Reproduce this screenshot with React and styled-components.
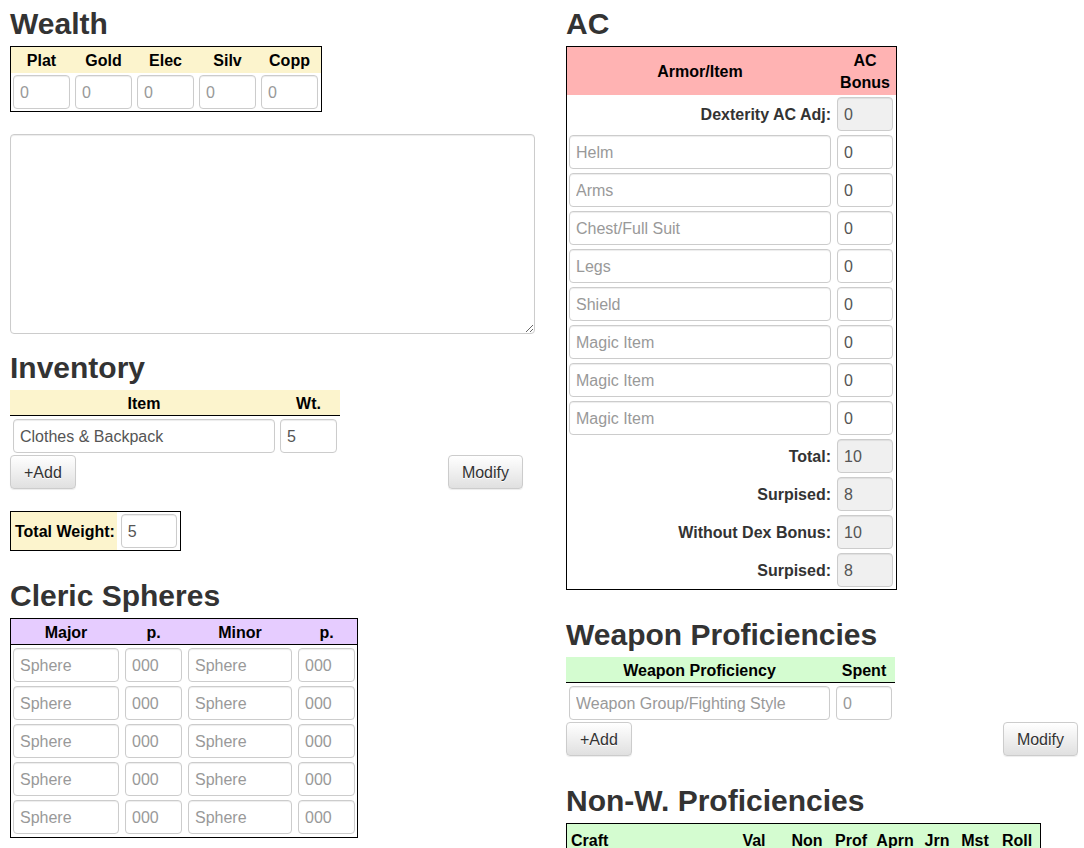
import React from "react";
import styled, { createGlobalStyle } from "styled-components";

const GlobalStyle = createGlobalStyle`
  html, body { margin: 0; padding: 0; background: #fff; }
  body {
    font-family: "Liberation Sans", Arial, Helvetica, sans-serif;
    font-size: 16px;
    color: #333;
  }
  * { box-sizing: border-box; }
`;

const YELLOW = "#fcf4cd";
const PINK = "#ffb3b3";
const LAVENDER = "#e6ccff";
const GREEN = "#d4fcd0";

const Page = styled.div`
  display: grid;
  grid-template-columns: 513px 512px;
  column-gap: 43px;
  padding: 7px 0 0 10px;
  align-items: start;
`;

const Column = styled.div`
  display: flex;
  flex-direction: column;
  align-items: flex-start;
  min-width: 0;
`;

const Heading = styled.h2`
  font-size: 30px;
  line-height: 33px;
  font-weight: 700;
  color: #333;
  margin: ${(p) => p.$mt || 0}px 0 6px;
`;

const Field = styled.input`
  display: block;
  width: ${(p) => (p.$w ? `${p.$w}px` : "100%")};
  height: 34px;
  padding: 7px 6px 5px;
  border: 1px solid #ccc;
  border-radius: 4px;
  background: #fff;
  font-family: inherit;
  font-size: 16px;
  color: #555;
  box-shadow: inset 0 1px 1px rgba(0, 0, 0, 0.075);
  margin: ${(p) => p.$m || 0};
  &::placeholder { color: #999; opacity: 1; }
  &[readonly] { background: #f0f0f0; }
`;

const Notes = styled.textarea`
  display: block;
  width: 525px;
  height: 200px;
  margin-top: 22px;
  border: 1px solid #ccc;
  border-radius: 4px;
  box-shadow: inset 0 1px 1px rgba(0, 0, 0, 0.075);
  font-family: inherit;
  font-size: 16px;
  padding: 6px;
`;

const Framed = styled.div`
  border: 1px solid #000;
  background: #fff;
  width: ${(p) => (p.$w ? `${p.$w}px` : "auto")};
`;

const Grid = styled.div`
  display: grid;
  grid-template-columns: ${(p) => p.$cols};
  column-gap: ${(p) => p.$gap}px;
  padding: ${(p) => p.$pad || "0"};
  align-items: center;
`;

const HeadRow = styled(Grid)`
  background: ${(p) => p.$bg};
  height: ${(p) => p.$h || 26}px;
  border-bottom: ${(p) => (p.$rule ? "1px solid #000" : "none")};
`;

const HeadCell = styled.div`
  font-weight: 700;
  font-size: 16px;
  line-height: 22px;
  padding-top: ${(p) => p.$pt ?? 2}px;
  color: #000;
  text-align: ${(p) => p.$align || "center"};
  padding-left: ${(p) => p.$pl || 0}px;
`;

const Rows = styled.div`
  display: flex;
  flex-direction: column;
  gap: 4px;
  padding: ${(p) => p.$pad};
`;

const RowLabel = styled.div`
  font-weight: 700;
  font-size: 16px;
  color: #333;
  text-align: right;
  padding-top: 2px;
`;

const ButtonBar = styled.div`
  display: flex;
  justify-content: space-between;
  width: 100%;
  margin-top: 2px;
`;

const Button = styled.button`
  height: 34px;
  padding: 7px 13px 5px;
  font-family: inherit;
  font-size: 16px;
  line-height: 20px;
  color: #333;
  border: 1px solid #ccc;
  border-radius: 4px;
  background: linear-gradient(to bottom, #fff 0%, #e0e0e0 100%);
  box-shadow: inset 0 1px 0 rgba(255, 255, 255, 0.15), 0 1px 1px rgba(0, 0, 0, 0.075);
  text-shadow: 0 1px 0 #fff;
  cursor: pointer;
`;

const TotalBox = styled.div`
  display: flex;
  align-items: stretch;
  border: 1px solid #000;
  margin-top: 22px;
`;

const TotalLabel = styled.div`
  display: flex;
  align-items: center;
  background: ${YELLOW};
  padding: 2px 2px 0 4px;
  font-weight: 700;
  font-size: 16px;
  color: #000;
`;

const coins = ["Plat", "Gold", "Elec", "Silv", "Copp"];
const acItems = [
  "Helm",
  "Arms",
  "Chest/Full Suit",
  "Legs",
  "Shield",
  "Magic Item",
  "Magic Item",
  "Magic Item",
];
const acTotals = [
  ["Total:", "10"],
  ["Surpised:", "8"],
  ["Without Dex Bonus:", "10"],
  ["Surpised:", "8"],
];
const nwCols = [
  ["Craft", "left"],
  ["Val"],
  ["Non"],
  ["Prof"],
  ["Aprn"],
  ["Jrn"],
  ["Mst"],
  ["Roll"],
];

const COIN_COLS = "repeat(5, 57px)";
const SPHERE_COLS = "106px 57px 104px 57px";
const ITEM_COLS = "262px 57px";
const AC_COLS = "262px 56px";
const WP_COLS = "261px 56px";
const NW_COLS = "1fr 54px 52px 36px 52px 32px 44px 40px";

function Wealth() {
  return (
    <>
      <Heading>Wealth</Heading>
      <Framed>
        <HeadRow $bg={YELLOW} $cols={COIN_COLS} $gap={5} $pad="0 3px 0 2px">
          {coins.map((c) => (
            <HeadCell key={c}>{c}</HeadCell>
          ))}
        </HeadRow>
        <Grid $cols={COIN_COLS} $gap={5} $pad="2px 3px 2px 2px">
          {coins.map((c) => (
            <Field key={c} placeholder="0" />
          ))}
        </Grid>
      </Framed>
      <Notes />
    </>
  );
}

function Inventory() {
  return (
    <>
      <Heading $mt={17}>Inventory</Heading>
      <div>
        <HeadRow $bg={YELLOW} $rule $cols={ITEM_COLS} $gap={5} $pad="0 3px">
          <HeadCell>Item</HeadCell>
          <HeadCell>Wt.</HeadCell>
        </HeadRow>
        <Grid $cols={ITEM_COLS} $gap={5} $pad="3px 3px 0">
          <Field defaultValue="Clothes & Backpack" />
          <Field defaultValue="5" />
        </Grid>
      </div>
      <ButtonBar>
        <Button>+Add</Button>
        <Button>Modify</Button>
      </ButtonBar>
      <TotalBox>
        <TotalLabel>Total Weight:</TotalLabel>
        <Field $w={56} $m="2px 3px 2px 4px" defaultValue="5" />
      </TotalBox>
    </>
  );
}

function ClericSpheres() {
  return (
    <>
      <Heading $mt={28}>Cleric Spheres</Heading>
      <Framed>
        <HeadRow $bg={LAVENDER} $rule $cols={SPHERE_COLS} $gap={6} $pad="0 2px">
          <HeadCell>Major</HeadCell>
          <HeadCell>p.</HeadCell>
          <HeadCell>Minor</HeadCell>
          <HeadCell>p.</HeadCell>
        </HeadRow>
        <Rows $pad="3px 2px">
          {[0, 1, 2, 3, 4].map((i) => (
            <Grid key={i} $cols={SPHERE_COLS} $gap={6}>
              <Field placeholder="Sphere" />
              <Field placeholder="000" />
              <Field placeholder="Sphere" />
              <Field placeholder="000" />
            </Grid>
          ))}
        </Rows>
      </Framed>
    </>
  );
}

function ArmorClass() {
  return (
    <>
      <Heading>AC</Heading>
      <Framed $w={331}>
        <HeadRow $bg={PINK} $h={48} $cols={AC_COLS} $gap={6} $pad="0 2px">
          <HeadCell>Armor/Item</HeadCell>
          <HeadCell>
            AC
            <br />
            Bonus
          </HeadCell>
        </HeadRow>
        <Rows $pad="2px">
          <Grid $cols={AC_COLS} $gap={6}>
            <RowLabel>Dexterity AC Adj:</RowLabel>
            <Field readOnly defaultValue="0" />
          </Grid>
          {acItems.map((item, i) => (
            <Grid key={i} $cols={AC_COLS} $gap={6}>
              <Field placeholder={item} />
              <Field defaultValue="0" />
            </Grid>
          ))}
          {acTotals.map(([label, val], i) => (
            <Grid key={i} $cols={AC_COLS} $gap={6}>
              <RowLabel>{label}</RowLabel>
              <Field readOnly defaultValue={val} />
            </Grid>
          ))}
        </Rows>
      </Framed>
    </>
  );
}

function WeaponProficiencies() {
  return (
    <>
      <Heading $mt={28}>Weapon Proficiencies</Heading>
      <div>
        <HeadRow $bg={GREEN} $rule $cols={WP_COLS} $gap={6} $pad="0 3px">
          <HeadCell>Weapon Proficiency</HeadCell>
          <HeadCell>Spent</HeadCell>
        </HeadRow>
        <Grid $cols={WP_COLS} $gap={6} $pad="3px 3px 0">
          <Field placeholder="Weapon Group/Fighting Style" />
          <Field placeholder="0" />
        </Grid>
      </div>
      <ButtonBar>
        <Button>+Add</Button>
        <Button>Modify</Button>
      </ButtonBar>
    </>
  );
}

function NonWeaponProficiencies() {
  return (
    <>
      <Heading $mt={28}>Non-W. Proficiencies</Heading>
      <Framed $w={475}>
        <HeadRow $bg={GREEN} $rule $h={30} $cols={NW_COLS} $gap={0} $pad="0 3px 0 0">
          {nwCols.map(([c, align]) => (
            <HeadCell key={c} $align={align} $pl={align ? 4 : 0} $pt={4}>
              {c}
            </HeadCell>
          ))}
        </HeadRow>
        <Grid $cols={NW_COLS} $gap={0} $pad="3px 2px">
          <Field placeholder="Proficiency" />
          <Field placeholder="0" />
          <Field placeholder="0" />
          <Field placeholder="0" />
          <Field placeholder="0" />
          <Field placeholder="0" />
          <Field placeholder="0" />
          <Field placeholder="0" />
        </Grid>
      </Framed>
    </>
  );
}

export default function App() {
  return (
    <>
      <GlobalStyle />
      <Page>
        <Column>
          <Wealth />
          <Inventory />
          <ClericSpheres />
        </Column>
        <Column>
          <ArmorClass />
          <WeaponProficiencies />
          <NonWeaponProficiencies />
        </Column>
      </Page>
    </>
  );
}
